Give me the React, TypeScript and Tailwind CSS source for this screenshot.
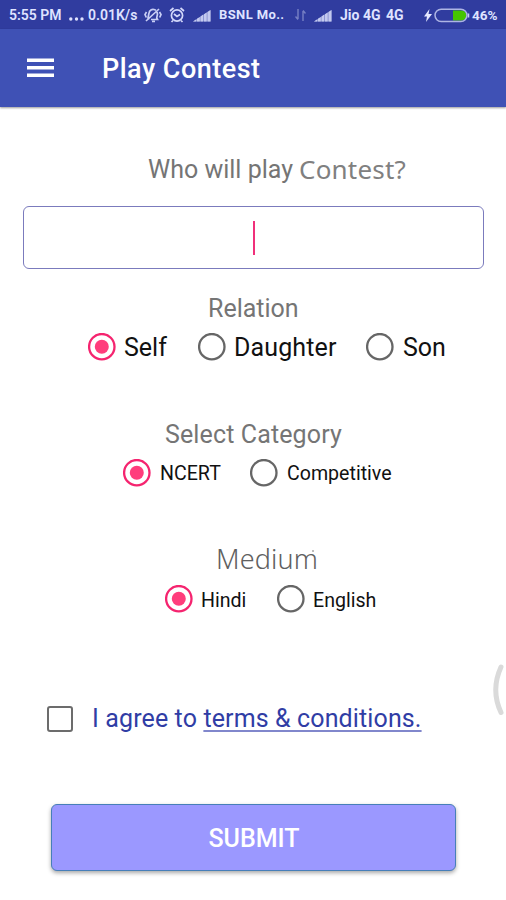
import type { ReactNode } from "react";

function Radio({ label, checked, className }: { label: string; checked?: boolean; className: string }) {
  return (
    <label className="flex h-7 items-center">
      <svg width="28" height="28" viewBox="0 0 28 28" className="shrink-0" fill="none">
        <circle cx="13.8" cy="13.7" r="12.7" stroke={checked ? "#f5246f" : "#666666"} strokeWidth="2.3" />
        {checked && <circle cx="13.8" cy="13.7" r="7" fill="#ff3d7c" />}
      </svg>
      <span className={`whitespace-nowrap text-[#111111] ${className}`}>{label}</span>
    </label>
  );
}

function Heading({ children, className }: { children: ReactNode; className: string }) {
  return <h2 className={`flex h-8 items-center whitespace-nowrap ${className}`}>{children}</h2>;
}

function Signal({ className }: { className: string }) {
  return (
    <svg width="18" height="13" viewBox="0 0 18 13" className={`shrink-0 ${className}`}>
      <path d="M0 12.500 17.500 1v11.500z" fill="#7f88cb" />
      <path d="M0 12.500 3.300 10.200v2.300zM4 9.700 6.800 7.900v4.600H4zM7.500 7.400l2.700-1.800v6.900H7.500zM11 5.200l2.700-1.800v9.100H11zM14.500 2.900 17.500 1v11.500h-3z" fill="#c3c9ef" />
    </svg>
  );
}

function StatusBar() {
  return (
    <div className="flex h-[29px] items-center bg-[#303c9f] pt-px pl-[9px] text-[14px] font-bold whitespace-nowrap text-[#dfe3ff]">
      <span className="w-[59px] text-[14px] font-semibold">5:55 PM</span>
      <svg width="16" height="14" viewBox="0 0 16 14" fill="#dfe3ff" className="shrink-0">
        <circle cx="2.8" cy="11" r="1.7" />
        <circle cx="8.500" cy="11" r="1.7" />
        <circle cx="14" cy="11" r="1.7" />
      </svg>
      <span className="ml-1 w-[56px] text-[14px] font-semibold">0.01K/s</span>
      <svg width="18" height="16" viewBox="0 0 18 16" className="shrink-0" fill="none" stroke="#c8cef5" strokeWidth="1.7">
        <path d="M5 12.500 4 11l1-5c.5-3 3-4 5-3.500l2 .8M13 5l.5 2-.8 4 .8 1.500H7M2 14 15 2" />
        <path d="M8 14.300h3M2.500 5 1 7.500l1.300 3M15.500 5 17 7.500l-1.300 3" />
      </svg>
      <svg width="16" height="16" viewBox="0 0 16 16" className="ml-[7px] shrink-0" fill="none" stroke="#d3d8fb" strokeWidth="1.7">
        <circle cx="8" cy="8.500" r="5.600" />
        <path d="M1 4 4.500 1M15 4l-3.500-3M5 7l3 2.500 3-2M4 13.500 2.500 15M12 13.500l1.500 1.500" />
      </svg>
      <Signal className="ml-2" />
      <span className="ml-[8px] w-[67px] text-[13px] tracking-[0.03em]">BSNL Mo..</span>
      <svg width="11" height="12" viewBox="0 0 11 12" className="ml-[9px] shrink-0" fill="none" stroke="#7780c4" strokeWidth="1.4">
        <path d="M3 0v10M.5 7.500 3 10.500M8 12V2M10.500 4.500 8 1.500" />
      </svg>
      <Signal className="ml-[8px]" />
      <span className="ml-[8px] w-[41px] text-[14px]">Jio 4G</span>
      <span className="ml-[5px] w-[19px] text-[14px]">4G</span>
      <svg width="8" height="13" viewBox="0 0 8 13" className="ml-[19px] shrink-0" fill="#e6e9ff">
        <path d="M5.500 0 0 7.500h3L2 13l6-8H4.500z" />
      </svg>
      <svg width="36" height="15" viewBox="0 0 36 15" className="ml-[2px] shrink-0">
        <path d="M19 2.500h8.500a5 5 0 0 1 0 10H19z" fill="#45c400" />
        <rect x="1" y="1.200" width="32" height="12.300" rx="6.150" fill="none" stroke="#aeb5e4" strokeWidth="1.500" />
        <path d="M34.500 5.500v4" stroke="#c8cef5" strokeWidth="1.500" />
      </svg>
      <span className="ml-[2px] text-[13.500px]">46%</span>
    </div>
  );
}

export default function App() {
  return (
    <div className="relative h-[900px] w-[506px] overflow-hidden bg-white font-[Roboto,'Liberation_Sans',sans-serif]">
      <StatusBar />
      <header className="flex h-[78px] items-center bg-[#3f51b5] pl-[27px] shadow-[0_1px_2px_rgba(0,0,0,0.4)]">
        <svg width="27" height="20" viewBox="0 0 27 20" fill="#ffffff" className="shrink-0">
          <path d="M0 .5h27V4H0zM0 8h27v3.500H0zM0 15.500h27V19H0z" />
        </svg>
        <h1 className="ml-[48px] pt-[3px] text-[27px] font-medium tracking-[0.018em] whitespace-nowrap text-white">Play Contest</h1>
      </header>

      <main>
        <Heading className="mt-[47px] pl-[148px] text-[25px] text-[#757575]">
          <span className="w-[151px]">Who will play</span>
          <span className="pb-[2px] font-['Noto_Sans',sans-serif] text-[26px] leading-8 tracking-[0.008em] text-[#808080]">Contest?</span>
        </Heading>

        <div className="mt-5 ml-[23px] flex h-[63px] w-[461px] items-center justify-center rounded-md border-[1.500px] border-[#7b7bbd]">
          <span className="ml-px h-[34px] w-[2px] bg-[#f0307a]" />
        </div>

        <Heading className="mt-[24px] pl-[208px] text-[25px] text-[#757575]">Relation</Heading>
        <div className="mt-[8px] flex gap-[29px] pl-[88px]">
          <Radio checked label="Self" className="ml-2 w-[45px] pt-0.5 text-[25px]" />
          <Radio label="Daughter" className="ml-2 w-[103px] pt-0.5 text-[25px] tracking-[0.005em]" />
          <Radio label="Son" className="ml-[9px] pt-0.5 text-[25px]" />
        </div>

        <Heading className="mt-[58px] pl-[165px] text-[25px] tracking-[0.005em] text-[#757575]">Select Category</Heading>
        <div className="mt-[8px] flex pl-[123px]">
          <Radio checked label="NCERT" className="ml-[9px] w-[90px] pt-0.5 text-[19.600px]" />
          <Radio label="Competitive" className="ml-[9px] pt-0.5 text-[19.600px]" />
        </div>

        <Heading className="mt-[56px] pl-[216px] font-['Noto_Sans',sans-serif] text-[27px] font-light tracking-[0.006em] text-[#606060]">
          <span className="relative">
            Medium
            <span className="absolute top-[11px] right-[4px] size-[2px] rounded-full bg-[#a8a8a8]" />
          </span>
        </Heading>
        <div className="mt-[10px] flex pl-[165px]">
          <Radio checked label="Hindi" className="ml-[8px] w-[76px] pt-[3px] text-[19.600px]" />
          <Radio label="English" className="ml-[8px] pt-[3px] text-[19.600px]" />
        </div>

        <div className="mt-[90px] flex h-8 items-center pl-[47px]">
          <span className="size-[26px] shrink-0 rounded-[3px] border-[2.500px] border-[#6c6c6c]" />
          <p className="ml-[19px] text-[25px] tracking-[0.005em] whitespace-nowrap text-[#303da5]">
            I agree to{" "}
            <a className="underline decoration-[#8187cc] decoration-[1.500px] underline-offset-[3px]">terms &amp; conditions.</a>
          </p>
        </div>

        <button className="mt-[69px] ml-[51px] flex h-[67px] w-[405px] items-center justify-center rounded-[6px] border-[1.500px] border-[#477fb8] bg-[#9b98ff] pt-[2px] pl-px text-[25px] font-medium text-white shadow-[0_2px_4px_rgba(0,0,0,0.35)]">
          SUBMIT
        </button>
      </main>

      <svg width="12" height="54" viewBox="0 0 12 54" className="absolute top-[663px] left-[492px]" fill="none">
        <path d="M9 4Q-1.500 27 9 49.500" stroke="#dadada" strokeWidth="5" strokeLinecap="round" />
      </svg>
    </div>
  );
}
